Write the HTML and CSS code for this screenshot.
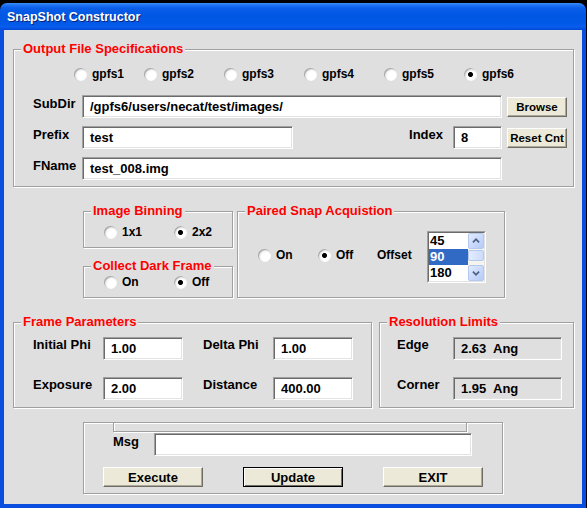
FILE: index.html
```html
<!DOCTYPE html>
<html>
<head>
<meta charset="utf-8">
<title>SnapShot Constructor</title>
<link rel="stylesheet" href="styles.css">
</head>
<body>
<div class="desk"></div>
<div class="window">
  <div class="titlebar">SnapShot Constructor</div>
  <div class="client">

    <fieldset class="grp out">
      <legend>Output File Specifications</legend>
      <div class="gbody out-body">
        <div class="radios fs">
          <span class="radio"><span class="dot"></span>gpfs1</span>
          <span class="radio"><span class="dot"></span>gpfs2</span>
          <span class="radio"><span class="dot"></span>gpfs3</span>
          <span class="radio"><span class="dot"></span>gpfs4</span>
          <span class="radio"><span class="dot"></span>gpfs5</span>
          <span class="radio"><span class="dot on"></span>gpfs6</span>
        </div>
        <div class="row first">
          <span class="lbl lcol">SubDir</span>
          <div class="entry wide">/gpfs6/users/necat/test/images/</div>
          <button class="btn sm">Browse</button>
        </div>
        <div class="row">
          <span class="lbl lcol">Prefix</span>
          <div class="entry prefix">test</div>
          <span class="lbl idx">Index</span>
          <div class="entry index">8</div>
          <button class="btn sm">Reset Cnt</button>
        </div>
        <div class="row">
          <span class="lbl lcol">FName</span>
          <div class="entry wide">test_008.img</div>
        </div>
      </div>
    </fieldset>

    <div class="mid">
      <div class="col">
        <fieldset class="grp bin">
          <legend>Image Binning</legend>
          <div class="gbody bin-body">
            <div class="radios pair">
              <span class="radio"><span class="dot"></span>1x1</span>
              <span class="radio"><span class="dot on"></span>2x2</span>
            </div>
          </div>
        </fieldset>
        <fieldset class="grp dark">
          <legend>Collect Dark Frame</legend>
          <div class="gbody dark-body">
            <div class="radios pair">
              <span class="radio"><span class="dot"></span>On</span>
              <span class="radio"><span class="dot on"></span>Off</span>
            </div>
          </div>
        </fieldset>
      </div>
      <fieldset class="grp paired">
        <legend>Paired Snap Acquistion</legend>
        <div class="gbody paired-body">
          <span class="radio p-on"><span class="dot"></span>On</span>
          <span class="radio p-off"><span class="dot on"></span>Off</span>
          <span class="offset">Offset</span>
          <div class="listbox">
            <div class="lbinner">
              <div class="items">
                <div class="item">45</div>
                <div class="item sel">90</div>
                <div class="item">180</div>
              </div>
              <div class="vscroll">
                <div class="sbtn"><svg viewBox="0 0 16 16" width="16" height="16"><path d="M4.5 9.5 L8 6 L11.5 9.5" fill="none" stroke="#4d6185" stroke-width="2"/></svg></div>
                <div class="track"><div class="thumb"></div></div>
                <div class="sbtn"><svg viewBox="0 0 16 16" width="16" height="16"><path d="M4.5 6.5 L8 10 L11.5 6.5" fill="none" stroke="#4d6185" stroke-width="2"/></svg></div>
              </div>
            </div>
          </div>
        </div>
      </fieldset>
    </div>

    <div class="lower">
      <fieldset class="grp frame">
        <legend>Frame Parameters</legend>
        <div class="gbody frame-body">
          <span class="lbl">Initial Phi</span>
          <div class="entry num">1.00</div>
          <span class="lbl gapl">Delta Phi</span>
          <div class="entry num">1.00</div>
          <span class="lbl">Exposure</span>
          <div class="entry num">2.00</div>
          <span class="lbl gapl">Distance</span>
          <div class="entry num">400.00</div>
        </div>
      </fieldset>
      <fieldset class="grp res">
        <legend>Resolution Limits</legend>
        <div class="gbody res-body">
          <span class="lbl">Edge</span>
          <div class="entry ro">2.63  Ang</div>
          <span class="lbl">Corner</span>
          <div class="entry ro">1.95  Ang</div>
        </div>
      </fieldset>
    </div>

    <div class="actions">
      <div class="strip"></div>
      <div class="msgrow">
        <span class="lbl msglbl">Msg</span>
        <div class="entry msg"></div>
      </div>
      <div class="btns">
        <button class="btn big">Execute</button>
        <button class="btn big def">Update</button>
        <button class="btn big">EXIT</button>
      </div>
    </div>

  </div>
</div>
</body>
</html>
```

FILE: styles.css
```css
* { box-sizing: border-box; }
html, body { margin: 0; padding: 0; }
body {
  width: 587px; height: 508px; overflow: hidden;
  background: #000;
  font-family: "Liberation Sans", Arial, Helvetica, sans-serif;
  font-weight: bold; font-size: 13px; color: #000;
}
.desk { height: 3px; }
.window { width: 586px; height: 505px; display: flex; flex-direction: column; }
.titlebar {
  flex: none; height: 27px;
  border-radius: 7px 7px 0 0;
  background: linear-gradient(to bottom, #3d8ff8 0, #2274f2 2px, #0b5ee8 5px, #0057e4 12px, #0059e6 20px, #0a5ded 24px, #0047d6 27px);
  color: #fff; font-size: 12.5px; line-height: 25px;
  padding: 2px 0 0 7px;
  text-shadow: 1px 1px 0 #0b1f7a;
}
.client {
  flex: 1;
  background: #dfdfdf;
  border: 4px solid #0a4ee0;
  border-top: 0;
  display: flex; flex-direction: column; align-items: flex-start;
}

/* group boxes */
.grp {
  margin: 0; padding: 0; min-width: 0;
  border: 1px solid #a0a0a0;
  box-shadow: 1px 1px 0 #fff, inset 1px 1px 0 #fff;
}
.grp legend {
  color: #f00; font-size: 13px; line-height: 16px;
  padding: 0 2px; margin-left: 7px;
  background: #dfdfdf;
}
.out { margin: 11px 0 0 9px; width: 561px; }
.out-body { padding: 8px 6px 6px 19px; }

/* radios */
.radios { display: grid; align-items: center; }
.radios.fs { grid-template-columns: 70px 80px 80px 80px 80px 80px; padding-left: 41px; height: 18px; }
.radios.pair { grid-template-columns: 70px 70px; height: 16px; }
.radio { display: flex; align-items: center; gap: 5px; font-size: 12px; line-height: 16px; }
.dot {
  flex: none; width: 13px; height: 13px; border-radius: 50%;
  background: radial-gradient(circle at 62% 62%, #fff 0, #fff 38%, #ebebeb 62%, #b8b8b8 100%);
  box-shadow: inset 1px 1px 1px rgba(0,0,0,0.28);
}
.dot.on {
  background:
    radial-gradient(circle at 50% 50%, #000 0, #000 2.1px, rgba(0,0,0,0) 2.9px),
    radial-gradient(circle at 62% 62%, #fff 0, #fff 38%, #ebebeb 62%, #b8b8b8 100%);
}

/* rows */
.row { display: flex; align-items: flex-start; height: 23px; margin-top: 8px; }
.row.first { margin-top: 12px; }
.lbl { line-height: 16px; margin-top: 1px; white-space: nowrap; }
.lcol { width: 49px; flex: none; }
.idx { margin-left: auto; }

.entry {
  flex: none; height: 23px;
  background: #fff;
  border: 1px solid; border-color: #a0a0a0 #fff #fff #a0a0a0;
  box-shadow: inset 1px 1px 0 #6b6b6b, inset -1px -1px 0 #e3e3e3;
  padding: 0 0 0 7px; line-height: 21px;
  white-space: pre; overflow: hidden; font-size: 13px;
}
.entry.wide { width: 420px; }
.entry.prefix { width: 211px; }
.entry.index { width: 49px; margin-left: 10px; }
.entry.num { width: 80px; }
.entry.ro { width: 109px; background: #dfdfdf; }
.entry.msg { width: 318px; }

/* buttons */
.btn {
  font: inherit; color: #000; padding: 0;
  background: #ece9d8;
  border: 1px solid; border-color: #fff #6f6d64 #6f6d64 #fff;
  box-shadow: inset -1px -1px 0 #aca899;
}
.btn.sm { width: 60px; height: 20px; margin: 2px 0 0 5px; font-size: 11.5px; }
.btn.big { width: 100px; height: 20px; font-size: 13px; }
.btn.def {
  border-color: #000;
  box-shadow: inset 1px 1px 0 #fff, inset -1px -1px 0 #716f64;
}

/* middle */
.mid { display: flex; margin: 16px 0 0 79px; gap: 4px; align-items: stretch; }
.col { width: 150px; display: flex; flex-direction: column; }
.bin-body { padding: 5px 0 7px 20px; }
.dark { margin-top: 10px; }
.dark-body { padding: 0 0 7px 20px; }
.paired { width: 268px; }
.paired-body { display: flex; align-items: center; margin-top: 12px; padding-left: 20px; }
.p-on { width: 60px; margin-top: -4px; flex: none; }
.p-off { width: 59px; margin-top: -4px; flex: none; }
.offset { width: 50px; flex: none; font-size: 12px; line-height: 16px; margin-top: -4px; }

.listbox {
  width: 59px; height: 52px; flex: none;
  border: 1px solid; border-color: #a0a0a0 #fff #fff #a0a0a0;
}
.lbinner {
  height: 100%; display: flex;
  border: 1px solid; border-color: #6b6b6b #e3e3e3 #e3e3e3 #6b6b6b;
  background: #fff;
}
.items { flex: 1; }
.item { height: 16px; line-height: 16px; padding-left: 1px; font-size: 13px; }
.item.sel { background: #316ac5; color: #fff; }
.vscroll { width: 16px; flex: none; display: flex; flex-direction: column; background: #f5f4ef; }
.sbtn {
  height: 16px; border-radius: 2px;
  border: 1px solid #b5c8f0;
  background: linear-gradient(135deg, #e2ebfe 0, #c6d7fb 60%, #b6cbf7 100%);
  display: flex; align-items: center; justify-content: center;
}
.sbtn svg { display: block; width: 14px; height: 14px; }
.track { height: 16px; padding-top: 1px; }
.thumb {
  height: 11px; border-radius: 2px;
  border: 1px solid #b5c8f0;
  background: linear-gradient(90deg, #e4ecfe 0, #cddcfb 100%);
}

/* lower */
.lower { display: flex; gap: 7px; margin: 16px 0 0 9px; align-items: stretch; }
.frame { width: 359px; }
.res { width: 195px; }
.frame-body {
  display: grid; grid-template-columns: 70px 80px 90px 80px;
  row-gap: 17px; padding: 7px 0 7px 19px;
}
.frame-body .lbl, .res-body .lbl { margin-top: 0; }
.gapl { padding-left: 20px; }
.res-body {
  display: grid; grid-template-columns: 56px 109px;
  row-gap: 17px; padding: 7px 0 7px 17px;
}

/* actions */
.actions {
  margin: 14px 0 0 79px; width: 420px;
  border: 1px solid #a0a0a0;
  box-shadow: 1px 1px 0 #fff, inset 1px 1px 0 #fff;
  padding-bottom: 6px;
}
.strip {
  margin-left: 29px; width: 354px; height: 9px;
  border: 1px solid #a0a0a0; border-top: 0;
  box-shadow: 1px 1px 0 #fff, inset 1px 0 0 #fff;
}
.msgrow { display: flex; align-items: flex-start; margin-top: 1px; padding-left: 29px; }
.msglbl { width: 41px; flex: none; }
.btns { display: flex; gap: 40px; margin-top: 11px; padding-left: 19px; }
```
